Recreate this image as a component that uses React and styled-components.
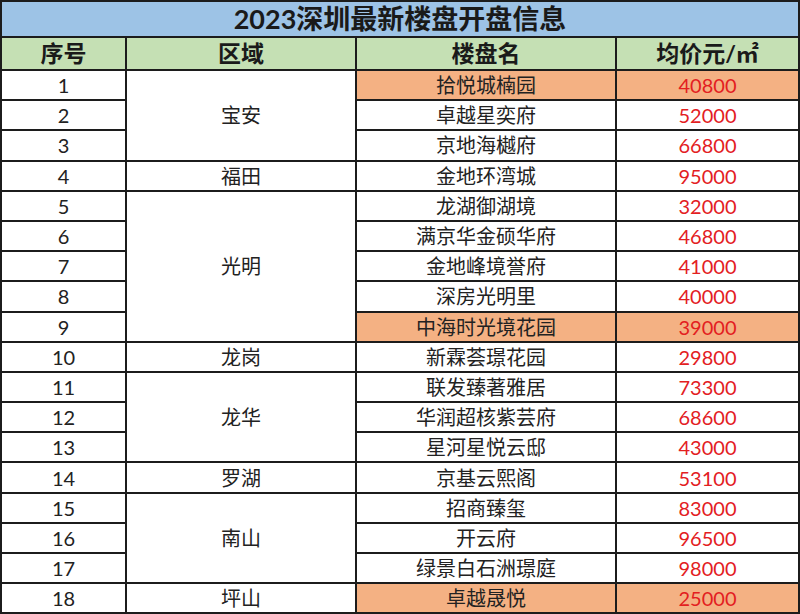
import React from 'react';
import styled, { createGlobalStyle } from 'styled-components';

const GlobalStyle = createGlobalStyle`
  html, body {
    margin: 0;
    padding: 0;
    background: #fff;
  }
`;

const rows = [
  { no: 1, area: '宝安', span: 3, name: '拾悦城楠园', price: 40800, hot: true },
  { no: 2, name: '卓越星奕府', price: 52000 },
  { no: 3, name: '京地海樾府', price: 66800 },
  { no: 4, area: '福田', span: 1, name: '金地环湾城', price: 95000 },
  { no: 5, area: '光明', span: 5, name: '龙湖御湖境', price: 32000 },
  { no: 6, name: '满京华金硕华府', price: 46800 },
  { no: 7, name: '金地峰境誉府', price: 41000 },
  { no: 8, name: '深房光明里', price: 40000 },
  { no: 9, name: '中海时光境花园', price: 39000, hot: true },
  { no: 10, area: '龙岗', span: 1, name: '新霖荟璟花园', price: 29800 },
  { no: 11, area: '龙华', span: 3, name: '联发臻著雅居', price: 73300 },
  { no: 12, name: '华润超核紫芸府', price: 68600 },
  { no: 13, name: '星河星悦云邸', price: 43000 },
  { no: 14, area: '罗湖', span: 1, name: '京基云熙阁', price: 53100 },
  { no: 15, area: '南山', span: 3, name: '招商臻玺', price: 83000 },
  { no: 16, name: '开云府', price: 96500 },
  { no: 17, name: '绿景白石洲璟庭', price: 98000 },
  { no: 18, area: '坪山', span: 1, name: '卓越晟悦', price: 25000, hot: true },
];

const Sheet = styled.table`
  width: 798px;
  margin-left: 0;
  border-collapse: collapse;
  table-layout: fixed;
  font-family: Lato, "Noto Sans CJK SC", sans-serif;
  color: #222;
`;

const TitleCell = styled.th`
  height: 34px;
  padding: 0;
  background: #9dc3e6;
  border: 2px solid #1c1c1c;
  font-size: 27px;
  font-weight: 700;
  line-height: 34px;
  color: #1a1a1a;
`;

const HeadCell = styled.th`
  height: 31px;
  padding: 0;
  background: #c5e0b4;
  border: 2px solid #1c1c1c;
  font-size: 23px;
  font-weight: 700;
  line-height: 31px;
  color: #1a1a1a;
`;

const Cell = styled.td`
  height: 28.2px;
  padding: 0;
  border: 2px solid #1c1c1c;
  background: ${p => (p.$hot ? '#f4b183' : '#fff')};
  color: ${p => (p.$red ? '#e3201f' : '#222')};
  font-size: 20px;
  line-height: 26px;
  text-align: center;
  vertical-align: middle;
  white-space: nowrap;
`;

export default function App() {
  return (
    <>
      <GlobalStyle />
      <Sheet>
        <colgroup>
          <col style={{ width: 125 }} />
          <col style={{ width: 230 }} />
          <col style={{ width: 260 }} />
          <col style={{ width: 183 }} />
        </colgroup>
        <thead>
          <tr>
            <TitleCell colSpan={4}>2023深圳最新楼盘开盘信息</TitleCell>
          </tr>
          <tr>
            <HeadCell>序号</HeadCell>
            <HeadCell>区域</HeadCell>
            <HeadCell>楼盘名</HeadCell>
            <HeadCell>均价元/㎡</HeadCell>
          </tr>
        </thead>
        <tbody>
          {rows.map(r => (
            <tr key={r.no}>
              <Cell>{r.no}</Cell>
              {r.area && <Cell rowSpan={r.span}>{r.area}</Cell>}
              <Cell $hot={r.hot}>{r.name}</Cell>
              <Cell $hot={r.hot} $red>{r.price}</Cell>
            </tr>
          ))}
        </tbody>
      </Sheet>
    </>
  );
}
